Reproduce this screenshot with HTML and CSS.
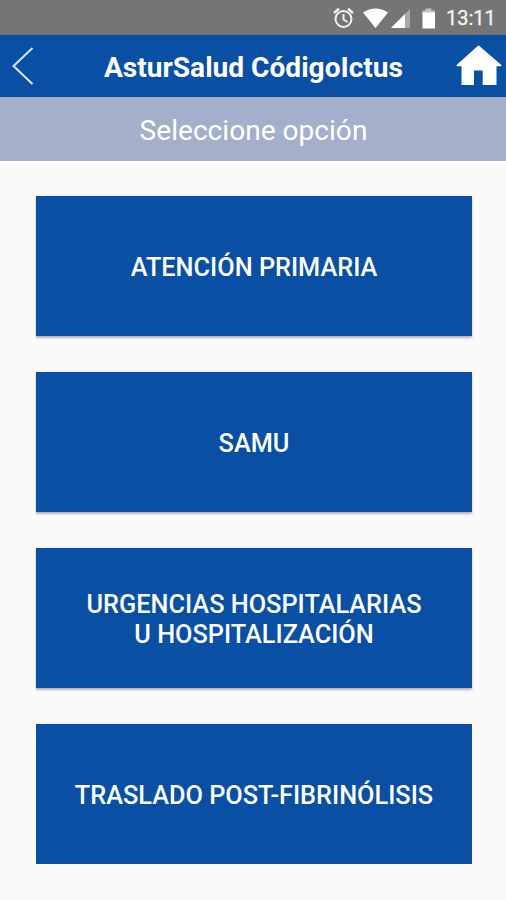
FILE: index.html
```html
<!DOCTYPE html>
<html lang="es">
<head>
<meta charset="utf-8">
<title>AsturSalud CódigoIctus</title>
<link rel="stylesheet" href="styles.css">
</head>
<body>
<div class="status">
  <svg class="status-icons" viewBox="0 0 110 34" width="110" height="34">
    <g fill="none" stroke="#f1f1f1" stroke-width="2">
      <circle cx="13.5" cy="18" r="8"/>
      <path d="M13.500 13v5.500l4 2.500"/>
      <path stroke-width="2.500" d="M4 12l5-4.200M23 12l-5-4.200"/>
    </g>
    <path fill="#fff" d="M33 11.500Q45.500 3.500 58 11.500L45.500 27Z"/>
    <path fill="#a9a9a9" d="M80 8V27H61Z"/>
    <path fill="#fff" d="M75 13V27H61Z"/>
    <path fill="#c4c4c4" d="M92.500 9.500h3V7.500h6v2h3.500v3H92.500Z"/>
    <path fill="#fff" d="M92.500 11.500H105V27.500H92.500Z"/>
  </svg>
  <span class="clock">13:11</span>
</div>
<header class="bar">
  <svg class="back" viewBox="0 0 24 40" width="24" height="40"><path d="M21.500 2L2.500 20L21.500 38" fill="none" stroke="#d3e8fb" stroke-width="2"/></svg>
  <h1 class="title">AsturSalud CódigoIctus</h1>
  <svg class="home" viewBox="0 0 48 42" width="48" height="42"><path fill="#fff" d="M22.500 .2L.3 20.300L1 21.300H5.500V40H18V25.500H26.700V40H40.500V21.300H45L45.700 20.300Z"/></svg>
</header>
<div class="subtitle"><span class="subtitle-text">Seleccione opción</span></div>
<main class="options">
  <button class="option"><span class="label">ATENCIÓN PRIMARIA</span></button>
  <button class="option"><span class="label">SAMU</span></button>
  <button class="option"><span class="label">URGENCIAS HOSPITALARIAS<br>U HOSPITALIZACIÓN</span></button>
  <button class="option option-last"><span class="label">TRASLADO POST-FIBRINÓLISIS</span></button>
</main>
</body>
</html>
```
FILE: styles.css
```css
* { box-sizing: border-box; }
body { margin: 0; height: 900px; overflow: hidden; background: #fafafa; font-family: Roboto, sans-serif; color: #fff; }
.status { height: 35px; background: #757575; display: flex; justify-content: flex-end; align-items: center; padding-right: 11px; }
.status-icons { margin-right: 6px; }
.clock { font-size: 20px; width: 49px; white-space: nowrap; color: #f4f4f4; -webkit-text-stroke: .3px #f4f4f4; }
.bar { height: 62px; background: #094fa3; display: grid; grid-template-columns: 50px 1fr 50px; align-items: center; }
.back { margin-left: 11px; }
.title { margin: 0; padding: 2px 0 0 1px; text-align: center; font-size: 28.1px; font-weight: 700; white-space: nowrap; }
.subtitle { height: 64px; padding: 2px 0 0 1px; background: #a3afcb; display: flex; align-items: center; justify-content: center; font-size: 28.1px; }
.options { padding: 35px 34px 0 36px; display: flex; flex-direction: column; gap: 36px; }
.option { height: 140px; border: 0; padding: 3px 0 0; background: #094fa3; box-shadow: 0 2px 2px rgba(0,0,0,.28); color: #fff; font: 500 25.3px/30px Roboto, sans-serif; }
.option-last { box-shadow: none; }
```
